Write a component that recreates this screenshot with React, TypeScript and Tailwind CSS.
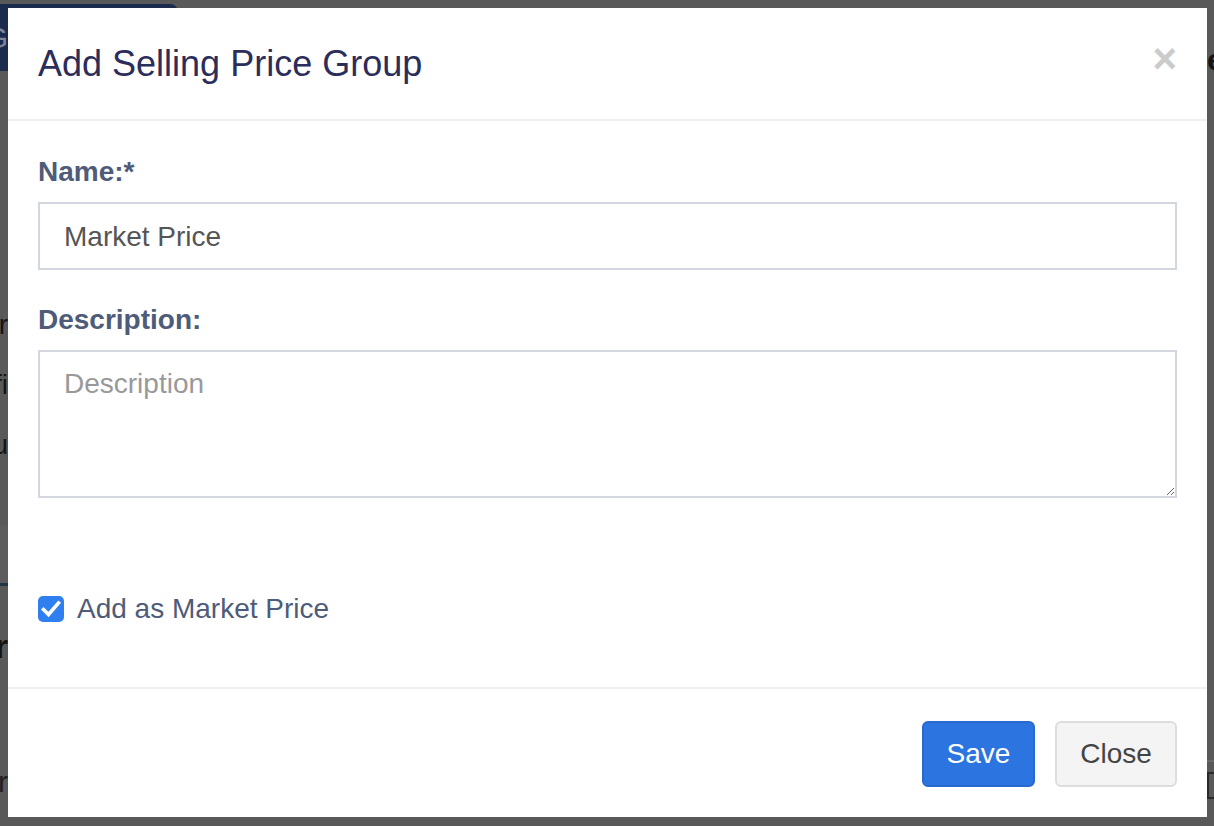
import React from "react";

const font = { fontFamily: '"Liberation Sans", Arial, Helvetica, sans-serif' };

function LeftFrag({ text, className }: { text: string; className?: string }) {
  return (
    <div className={"flex h-[40px] w-[8px] justify-end overflow-hidden " + (className ?? "")}>
      <span className="whitespace-nowrap text-[28px] leading-[40px] text-[#151515]">{text}</span>
    </div>
  );
}

export default function App() {
  return (
    <div
      className="relative h-[826px] w-[1214px] overflow-hidden bg-[#595959]"
      style={font}
    >
      {/* dimmed page behind the dialog */}
      <div className="flex h-full w-full justify-between">
        <div className="flex w-[178px] flex-col">
          <div className="mt-[4px] flex h-[67px] w-[178px] items-center overflow-hidden rounded-tr-[8px] bg-[#1b2b4e]">
            <div className="flex w-[8px] justify-end overflow-hidden">
              <span className="text-[30px] leading-none text-[#7d879b]">G</span>
            </div>
          </div>
          <LeftFrag text="r" className="mt-[234px]" />
          <LeftFrag text="fi" className="mt-[20px]" />
          <LeftFrag text="u" className="mt-[20px]" />
          <div className="mt-[60px] h-[58px] w-[8px] bg-[#5d5d5d]" />
          <div className="h-[3px] w-[8px] bg-[#1f3644]" />
          <div className="mt-[40px] flex h-[40px] w-[8px] justify-end overflow-hidden">
            <span className="text-[34px] font-bold leading-[40px] text-[#121212]">r</span>
          </div>
          <div className="mt-[96px] flex h-[40px] w-[8px] justify-end overflow-hidden">
            <span className="text-[30px] leading-[40px] text-[#202020]">r</span>
          </div>
        </div>
        <div className="flex w-[7px] flex-col overflow-hidden">
          <div className="mt-[40px] h-[40px] overflow-hidden">
            <span className="whitespace-nowrap text-[30px] font-bold leading-[40px] text-[#141414]">e</span>
          </div>
          <div className="mt-[680px] h-[2px] w-full bg-[#6a6a6a]" />
          <div className="mt-[10px] h-[27px] w-full border-y-[2px] border-l-[2px] border-[#2a2a2a]" />
        </div>
      </div>

      {/* modal dialog */}
      <div className="absolute left-[8px] top-[8px] flex h-[809px] w-[1199px] flex-col bg-white">
        {/* header */}
        <div className="flex items-start justify-between border-b-[2px] border-[#f0f0f0] px-[30px] pb-[30px] pt-[30px]">
          <h4 className="text-[36px] font-normal leading-[51px] text-[#2b2d5a]">
            Add Selling Price Group
          </h4>
          <button className="mt-0 text-[42px] font-bold leading-none text-[#cbcbcb]">
            ×
          </button>
        </div>

        {/* body */}
        <div className="flex flex-1 flex-col px-[30px] pt-[31px]">
          <label className="mb-[10px] block text-[28px] font-bold leading-[40px] text-[#4e5b79]">
            Name:*
          </label>
          <input
            className="h-[68px] w-full border-[2px] border-[#d2d6de] px-[24px] pt-[2px] text-[28px] text-[#555555] outline-none"
            defaultValue="Market Price"
            style={font}
          />
          <label className="mb-[10px] mt-[30px] block text-[28px] font-bold leading-[40px] text-[#4e5b79]">
            Description:
          </label>
          <textarea
            className="h-[148px] w-full resize-y border-[2px] border-[#d2d6de] px-[24px] py-[12px] text-[28px] leading-[40px] text-[#555555] outline-none placeholder:text-[#999999]"
            placeholder="Description"
            style={font}
          />
          <div className="mt-[91px] flex items-center gap-[13px]">
            <span className="flex h-[26px] w-[26px] items-center justify-center rounded-[5px] bg-[#2f7ff0]">
              <svg width="20" height="18" viewBox="0 0 20 18" fill="none">
                <path
                  d="M2.5 9.5 L7.5 14.5 L17.5 3"
                  stroke="white"
                  strokeWidth="3.6"
                  strokeLinecap="square"
                  strokeLinejoin="miter"
                />
              </svg>
            </span>
            <span className="text-[28px] leading-[40px] text-[#4e5b79]">Add as Market Price</span>
          </div>
        </div>

        {/* footer */}
        <div className="flex items-center justify-end gap-[20px] border-t-[2px] border-[#f0f0f0] px-[30px] pb-[30px] pt-[32px]">
          <button className="flex h-[66px] w-[113px] items-center justify-center rounded-[6px] border-[2px] border-[#2868cf] bg-[#2c75e0] text-[28px] text-white">
            Save
          </button>
          <button className="flex h-[66px] w-[122px] items-center justify-center rounded-[6px] border-[2px] border-[#dddddd] bg-[#f4f4f4] text-[28px] text-[#444444]">
            Close
          </button>
        </div>
      </div>
    </div>
  );
}
